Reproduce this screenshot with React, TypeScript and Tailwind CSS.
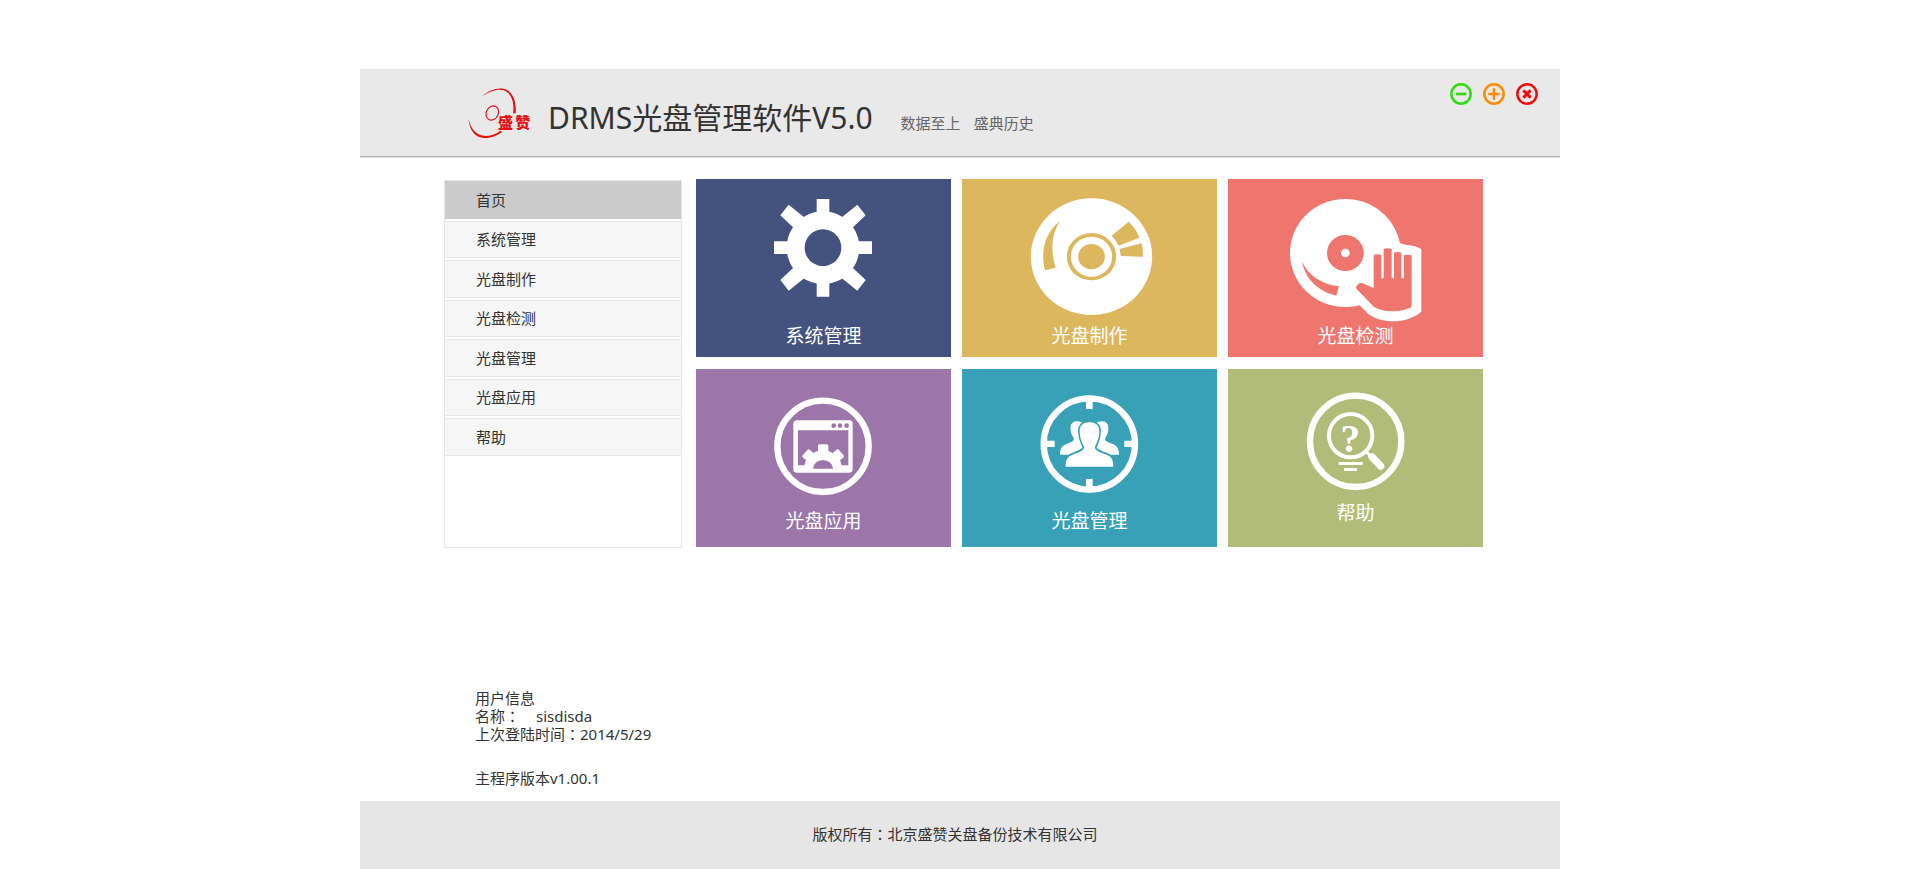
import type { ReactNode } from "react";

const menu = ["首页", "系统管理", "光盘制作", "光盘检测", "光盘管理", "光盘应用", "帮助"];

function Logo() {
  return (
    <svg viewBox="0 0 240 192" className="h-16 w-20 shrink-0" role="img" aria-label="盛赞" fill="#e80f0f">
      <path d="M66 49 C88 30 112 22 133 27 C158 35 170 62 167 100 L159 100 C164 66 154 39 131 31 C112 26 92 33 66 49 Z" />
      <path d="M26 117 C27 148 44 174 74 174 C96 174 113 165 127 155 L121 152 C106 163 92 168 76 168 C48 167 32 146 26 117 Z" />
      <ellipse cx="97" cy="99" rx="18" ry="22" transform="rotate(28 97 99)" fill="none" stroke="#e80f0f" strokeWidth="3.5" />
      <text x="114" y="143" fontSize="45" className="font-['Noto_Sans_CJK_SC',sans-serif] font-black">盛</text>
      <text x="166" y="143" fontSize="45" className="font-['Noto_Sans_CJK_SC',sans-serif] font-black">赞</text>
    </svg>
  );
}

function Colon() {
  return <span className="font-['Noto_Sans_CJK_TC',sans-serif]">：</span>;
}

function WindowButton({ label, color, children }: { label: string; color: string; children: ReactNode }) {
  return (
    <button type="button" aria-label={label} className={color}>
      <svg viewBox="0 0 66 66" className="block size-[22px]" fill="none" stroke="currentColor">
        <circle cx="33" cy="33" r="29" strokeWidth="7.5" />
        {children}
      </svg>
    </button>
  );
}

const gear = (
  <g fill="#fff">
    <path
      fillRule="evenodd"
      d="M399 124 a109 109 0 1 0 0.1 0 Z M399 178 a55 55 0 1 1 -0.1 0 Z"
    />
    <path d="M380 87 h38 v44 h-38 Z M380 336 h38 v44 h-38 Z M252 214 h44 v38 h-44 Z M502 214 h44 v38 h-44 Z" />
    <path d="M502 104 L527 136 L489 172 L450 146 Z M296 104 L271 136 L309 172 L348 146 Z" />
    <path d="M502 362 L527 330 L489 294 L450 320 Z M296 362 L271 330 L309 294 L348 320 Z" />
  </g>
);

const disc = (
  <g fill="#dcb75e">
    <ellipse cx="409.500" cy="260" rx="182" ry="175" fill="#fff" />
    <ellipse cx="409.500" cy="260" rx="74" ry="71" />
    <ellipse cx="409.500" cy="260" rx="62" ry="60" fill="#fff" />
    <ellipse cx="409.500" cy="260" rx="40" ry="38" />
    <path d="M315 154 C272 186 255 240 270 301 L302 293 C286 244 289 192 315 154 Z" />
    <path d="M521 155 Q543 175 553 203 L491 227 Q483 210 470 197 Z" />
    <path d="M560 220 Q565 240 563 260 L497 258 Q497 247 493 237 Z" />
  </g>
);

const scan = (
  <g fill="#ef766e">
    <ellipse cx="376" cy="249" rx="166" ry="162" fill="#fff" />
    <path fill="#fff" d="M530 215 Q538 216 546 221 C562 227 583 224 604 237 V425 C562 461 488 463 445 432 L416 403 Z" />
    <ellipse cx="376" cy="249" rx="55" ry="54" />
    <circle cx="376" cy="249" r="13" fill="#fff" />
    <path d="M246 275 C266 315 300 342 357 349 L349 377 C298 364 258 332 246 275 Z" />
    <path d="M461 255 q12 -4 23 0 V325 h7 V237 q12 -5 24 0 V325 h7 V248 q12 -4 22 0 V325 h8 V256 q12 -4 23 0 V411 C545 428 490 428 462 411 L407 354 Q412 340 424 338 L461 354 Z" />
  </g>
);

const app = (
  <g fill="#fff">
    <circle cx="399" cy="259" r="137" fill="none" stroke="#fff" strokeWidth="19" />
    <path
      fillRule="evenodd"
      d="M320 181 H478 Q488 181 488 191 V328 Q488 338 478 338 H320 Q310 338 310 328 V191 Q310 181 320 181 Z M324 211 V316 H475 V211 Z"
    />
    <g fill="#9c75a9">
      <circle cx="431" cy="197" r="7" />
      <circle cx="450" cy="197" r="7" />
      <circle cx="470" cy="197" r="7" />
    </g>
    <path d="M342 326 A57 55 0 0 1 456 326 Z" />
    <rect x="384" y="253" width="31" height="35" rx="5" />
    <rect x="384" y="253" width="31" height="35" rx="5" transform="rotate(-49 399.500 325)" />
    <rect x="384" y="253" width="31" height="35" rx="5" transform="rotate(49 399.500 325)" />
    <path fill="#9c75a9" d="M369 326 A30 26 0 0 1 429 326 Z" />
  </g>
);

const backPerson =
  "M315 284 C315 264 322 255 342 249 C356 244 359 240 355 232 C346 220 338 185 366 184 Q378 184 386 190 L390 260 L345 284 Z";

const users = (
  <g fill="#fff">
    <circle cx="403" cy="252" r="137" fill="none" stroke="#fff" strokeWidth="19" />
    <path d="M393 120 h20 v27 h-20 Z M393 357 h20 v27 h-20 Z M272 242 h27 v19 h-27 Z M508 242 h27 v19 h-27 Z" />
    <path d={backPerson} />
    <path d={backPerson} transform="translate(807 0) scale(-1 1)" />
    <path
      stroke="#38a1b7"
      strokeWidth="10"
      paintOrder="stroke"
      d="M332 320 C332 296 338 288 360 281 C378 276 387 270 387 262 C385 252 374 240 374 214 C374 195 386 187 403.500 187 C421 187 433 195 433 214 C433 240 422 252 420 262 C420 270 429 276 447 281 C469 288 475 296 475 320 Z"
    />
  </g>
);

const help = (
  <g fill="#fff">
    <circle cx="407" cy="244" r="137" fill="none" stroke="#fff" strokeWidth="19" />
    <circle cx="392" cy="227" r="65" fill="none" stroke="#fff" strokeWidth="12" />
    <text x="391" y="275" fontSize="118" textAnchor="middle" className="font-['Liberation_Serif',serif] font-bold">?</text>
    <path d="M437 273 L452 289" stroke="#fff" strokeWidth="9" />
    <path d="M456 291 L482 318" stroke="#fff" strokeWidth="22" strokeLinecap="round" />
    <path d="M356 306 h72 v9 h-72 Z M372 324 h39 v9 h-39 Z" />
  </g>
);

const tiles = [
  { name: "系统管理", bg: "bg-[#43527f]", size: "h-[145px]", box: "18 27 765 435", art: gear },
  { name: "光盘制作", bg: "bg-[#dcb75e]", size: "h-[145px]", box: "21 27 765 435", art: disc },
  { name: "光盘检测", bg: "bg-[#ef766e]", size: "h-[145px]", box: "24 27 765 435", art: scan },
  { name: "光盘应用", bg: "bg-[#9c75a9]", size: "h-[140px]", box: "18 27 765 420", art: app },
  { name: "光盘管理", bg: "bg-[#38a1b7]", size: "h-[140px]", box: "21 27 765 420", art: users },
  { name: "帮助", bg: "bg-[#b0bc78]", size: "h-[132px]", box: "24 27 765 396", art: help },
];

export default function App() {
  return (
    <div className="flex min-h-screen flex-col items-center bg-white pt-[69px] font-['Noto_Sans','Noto_Sans_CJK_SC',sans-serif] text-[15px] text-[#333]">
      <div className="flex w-full max-w-[1200px] grow flex-col">
        <header className="flex items-start justify-between border-b border-[#b4b4b4] bg-[#e9e9e9] pt-[11px] pr-[22px] pb-3 pl-[100px] shadow-[0_1px_0_#dcdcdc]">
          <div className="flex">
            <Logo />
            <div className="flex items-baseline pt-4 pl-2">
              <h1 className="text-[30px] leading-[44px]">DRMS光盘管理软件V5.0</h1>
              <p className="flex gap-[13px] pl-7 text-[#666]">
                <span>数据至上</span>
                <span>盛典历史</span>
              </p>
            </div>
          </div>
          <div className="flex gap-[11px] pt-[3px]">
            <WindowButton label="最小化" color="text-[#2fdc0a]">
              <path d="M17 33 H49" strokeWidth="8" />
            </WindowButton>
            <WindowButton label="最大化" color="text-[#ff8a00]">
              <path d="M16 33 H50 M33 16 V50" strokeWidth="7.5" />
            </WindowButton>
            <WindowButton label="关闭" color="text-[#f50a0a]">
              <path d="M22 22 L44 44 M44 22 L22 44" strokeWidth="9" />
            </WindowButton>
          </div>
        </header>

        <main className="flex grow flex-col pt-[22px] pr-[77px] pl-[84px]">
          <div className="flex gap-[14px]">
            <nav className="mt-px -mb-px w-[238px] shrink-0 border border-[#e6e6e6]">
              <ul className="grid h-[275px] grid-rows-7 gap-[2px]">
                {menu.map((name, i) => (
                  <li key={name} className="flex">
                    <a
                      href="#"
                      aria-current={i === 0 ? "page" : undefined}
                      className={
                        i === 0
                          ? "flex grow items-center bg-[#cbcbcb] pl-[31px]"
                          : "flex grow items-center border-y border-[#e6e6e6] bg-[#f6f6f6] pl-[31px]"
                      }
                    >
                      {name}
                    </a>
                  </li>
                ))}
              </ul>
            </nav>
            <div className="grid grow grid-cols-3 gap-x-[11px] gap-y-3">
              {tiles.map((tile) => (
                <button
                  key={tile.name}
                  type="button"
                  className={`flex h-[178px] flex-col items-center justify-start text-[19px] leading-6 text-white ${tile.bg}`}
                >
                  <svg viewBox={tile.box} className={`w-full shrink-0 ${tile.size}`} aria-hidden="true">
                    {tile.art}
                  </svg>
                  <span>{tile.name}</span>
                </button>
              ))}
            </div>
          </div>

          <section className="mt-auto pb-[14px] pl-[31px] leading-[18px]">
            <h2>用户信息</h2>
            <p className="flex gap-4">
              <span>
                名称
                <Colon />
              </span>
              <span>sisdisda</span>
            </p>
            <p>
              上次登陆时间
              <Colon />
              2014/5/29
            </p>
            <p className="pt-[26px]">主程序版本v1.00.1</p>
          </section>
        </main>

        <footer className="bg-[#e6e6e6] pt-[21px] pr-[10px] pb-[23px] text-center leading-6">
          版权所有
          <Colon />
          北京盛赞关盘备份技术有限公司
        </footer>
      </div>
    </div>
  );
}
